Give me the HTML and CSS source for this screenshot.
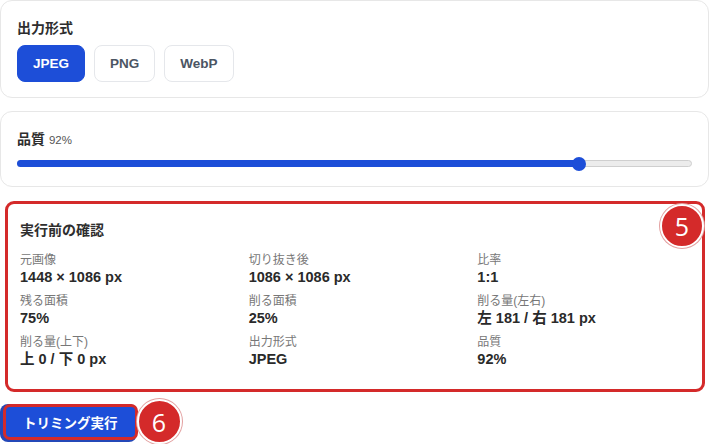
FILE: index.html
```html
<!DOCTYPE html>
<html lang="ja">
<head>
    <meta charset="utf-8">
    <link rel="stylesheet" href="styles.css">
</head>
<body>
    <div class="panel">
        <section class="card format-card">
            <h4 class="card-title">出力形式</h4>
            <div class="format-buttons">
                <button type="button" class="fmt active">JPEG</button>
                <button type="button" class="fmt">PNG</button>
                <button type="button" class="fmt">WebP</button>
            </div>
        </section>

        <section class="card quality-card">
            <h4 class="card-title">品質 <span class="quality-value">92%</span></h4>
            <div class="track">
                <div class="fill" style="width:83.3%"></div>
                <div class="thumb" style="left:83.3%"></div>
            </div>
        </section>

        <section class="card confirm-card">
            <span class="badge badge-five">5</span>
            <h4 class="card-title">実行前の確認</h4>
            <div class="summary">
                <div class="item"><div class="label">元画像</div><div class="value">1448 × 1086 px</div></div>
                <div class="item"><div class="label">切り抜き後</div><div class="value">1086 × 1086 px</div></div>
                <div class="item"><div class="label">比率</div><div class="value">1:1</div></div>
                <div class="item"><div class="label">残る面積</div><div class="value">75%</div></div>
                <div class="item"><div class="label">削る面積</div><div class="value">25%</div></div>
                <div class="item"><div class="label">削る量(左右)</div><div class="value">左 181 / 右 181 px</div></div>
                <div class="item"><div class="label">削る量(上下)</div><div class="value">上 0 / 下 0 px</div></div>
                <div class="item"><div class="label">出力形式</div><div class="value">JPEG</div></div>
                <div class="item"><div class="label">品質</div><div class="value">92%</div></div>
            </div>
        </section>

        <div class="actions">
            <button type="button" class="run-btn">トリミング実行</button>
            <span class="badge badge-six">6</span>
        </div>
    </div>
</body>
</html>
```

FILE: styles.css
```css
body {
    margin: 0;
    background-color: #ffffff;
    font-family: "Liberation Sans", "Noto Sans CJK JP", sans-serif;
    color: #222;
}

.panel {
    width: 709px;
    display: flex;
    flex-direction: column;
    gap: 13px;
}

.card {
    position: relative;
    border: 1px solid #e7e7e7;
    border-radius: 12px;
    background: #fff;
    padding: 18px 16px 15px 16px;
}

.card-title {
    margin: 0;
    font-size: 14px;
    line-height: 18px;
    font-weight: bold;
    color: #2e2e2e;
}

.format-buttons {
    display: flex;
    gap: 9px;
    margin-top: 8px;
}

.fmt {
    height: 37px;
    padding: 0 15px;
    border: 1px solid #e5e7eb;
    border-radius: 8px;
    background: #fff;
    font-family: inherit;
    font-size: 13.5px;
    font-weight: bold;
    color: #4b5563;
}

.fmt.active {
    background: #1d4ed8;
    border-color: #1d4ed8;
    color: #fff;
}

.quality-card {
    padding-bottom: 19px;
}

.quality-value {
    font-size: 11.5px;
    font-weight: normal;
    color: #555;
}

.track {
    position: relative;
    margin-top: 11px;
    height: 7px;
    box-sizing: border-box;
    border: 1px solid #cfcfcf;
    border-radius: 4px;
    background: #ececec;
}

.fill {
    height: 7px;
    margin: -1px 0 0 -1px;
    border-radius: 4px;
    background: #1d4ed8;
}

.thumb {
    position: absolute;
    top: -4px;
    width: 14px;
    height: 14px;
    margin-left: -7px;
    border-radius: 50%;
    background: #1d4ed8;
}

.confirm-card {
    margin: 1px 4px 0 5px;
    border: 3px solid #d42a2a;
    border-radius: 9px;
    padding: 17px 12px 20px 12px;
}

.summary {
    display: grid;
    grid-template-columns: repeat(3, 1fr);
    column-gap: 16px;
    row-gap: 6px;
    margin-top: 13px;
}

.label {
    font-size: 12px;
    line-height: 16px;
    color: #777;
}

.value {
    font-size: 14.5px;
    line-height: 19px;
    font-weight: bold;
    color: #2a2a2a;
}

.badge {
    display: flex;
    align-items: center;
    justify-content: center;
    width: 40px;
    height: 40px;
    border: 2px solid #fff;
    border-radius: 50%;
    background: #d42a2a;
    color: #fff;
    font-family: "Open Sans", "Liberation Sans", sans-serif;
    font-size: 25px;
    box-shadow: 0 0 0 1px #e3a0a0;
}

.badge-five {
    position: absolute;
    top: 0;
    right: -2px;
}

.actions {
    display: flex;
    align-items: center;
    margin-top: -6px;
}

.run-btn {
    height: 36px;
    padding: 0 17px;
    margin-left: 3px;
    border: 3px solid #d42a2a;
    border-radius: 7px;
    background: #1d4ed8;
    box-shadow: -2px 1px 0 1px #2448b8;
    font-family: inherit;
    font-size: 13.5px;
    font-weight: bold;
    color: #fff;
}

.badge-six {
    width: 41px;
    height: 41px;
    margin-left: -1px;
}
```
